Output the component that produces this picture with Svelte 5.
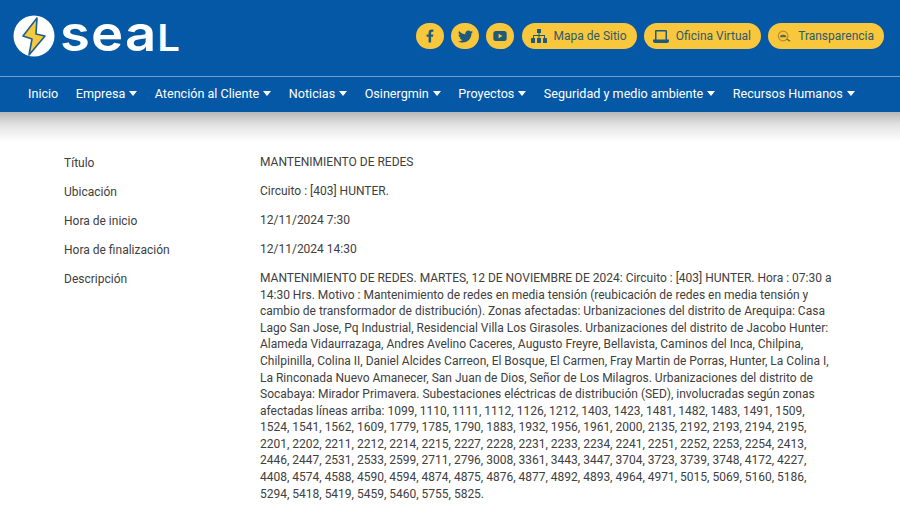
<script>
	const menu = [
		{ label: 'Inicio', caret: false },
		{ label: 'Empresa', caret: true },
		{ label: 'Atención al Cliente', caret: true },
		{ label: 'Noticias', caret: true },
		{ label: 'Osinergmin', caret: true },
		{ label: 'Proyectos', caret: true },
		{ label: 'Seguridad y medio ambiente', caret: true },
		{ label: 'Recursos Humanos', caret: true }
	];

	const rows = [
		['Título', 'MANTENIMIENTO DE REDES'],
		['Ubicación', 'Circuito : [403] HUNTER.'],
		['Hora de inicio', '12/11/2024 7:30'],
		['Hora de finalización', '12/11/2024 14:30']
	];

	const descripcion = `MANTENIMIENTO DE REDES. MARTES, 12 DE NOVIEMBRE DE 2024: Circuito : [403] HUNTER. Hora : 07:30 a 14:30 Hrs. Motivo : Mantenimiento de redes en media tensión (reubicación de redes en media tensión y cambio de transformador de distribución). Zonas afectadas: Urbanizaciones del distrito de Arequipa: Casa Lago San Jose, Pq Industrial, Residencial Villa Los Girasoles. Urbanizaciones del distrito de Jacobo Hunter: Alameda Vidaurrazaga, Andres Avelino Caceres, Augusto Freyre, Bellavista, Caminos del Inca, Chilpina, Chilpinilla, Colina II, Daniel Alcides Carreon, El Bosque, El Carmen, Fray Martin de Porras, Hunter, La Colina I, La Rinconada Nuevo Amanecer, San Juan de Dios, Señor de Los Milagros. Urbanizaciones del distrito de Socabaya: Mirador Primavera. Subestaciones eléctricas de distribución (SED), involucradas según zonas afectadas líneas arriba: 1099, 1110, 1111, 1112, 1126, 1212, 1403, 1423, 1481, 1482, 1483, 1491, 1509, 1524, 1541, 1562, 1609, 1779, 1785, 1790, 1883, 1932, 1956, 1961, 2000, 2135, 2192, 2193, 2194, 2195, 2201, 2202, 2211, 2212, 2214, 2215, 2227, 2228, 2231, 2233, 2234, 2241, 2251, 2252, 2253, 2254, 2413, 2446, 2447, 2531, 2533, 2599, 2711, 2796, 3008, 3361, 3443, 3447, 3704, 3723, 3739, 3748, 4172, 4227, 4408, 4574, 4588, 4590, 4594, 4874, 4875, 4876, 4877, 4892, 4893, 4964, 4971, 5015, 5069, 5160, 5186, 5294, 5418, 5419, 5459, 5460, 5755, 5825.`;
</script>

<header class="site-header">
	<div class="top">
		<div class="logo">
			<svg class="logo-mark" viewBox="0 0 42 42" width="42" height="42">
				<circle cx="21" cy="21" r="20.5" fill="#fff" />
				<path d="M24 3 L10 21 L19 24 L16 40 L32 21 L23 19 Z" fill="#f7c93e" stroke="#1c5f8c" stroke-width="1.600" stroke-linejoin="round" />
			</svg>
			<span class="logo-text">sea<span class="logo-l">L</span></span>
		</div>
		<div class="actions">
			<a class="round" aria-label="Facebook">
				<svg viewBox="0 0 320 512" width="8" height="14"><path d="M279 288l14-93h-89v-60c0-25 12-50 52-50h41V7s-37-7-72-7c-73 0-121 45-121 125v70H23v93h81v224h100V288z" /></svg>
			</a>
			<a class="round" aria-label="Twitter">
				<svg viewBox="0 0 512 512" width="15" height="15"><path d="M459 152c.3 4.500.3 9 .3 13.600 0 138.700-105.600 298.600-298.600 298.600-59.500 0-114.700-17.200-161.100-47.100 8.400 1 16.600 1.300 25.300 1.300 49 0 94.300-16.600 130.300-44.800-46.100-1-84.800-31.200-98.100-72.800 6.500 1 13 1.600 19.800 1.600 9.400 0 18.800-1.300 27.600-3.600-48.100-9.700-84.100-52-84.100-103v-1.300c14 7.800 30.200 12.700 47.400 13.300-28.300-18.800-46.800-51-46.800-87.400 0-19.500 5.200-37.400 14.300-53 51.700 63.700 129.300 105.300 216.400 109.800-1.600-7.800-2.600-15.900-2.600-24 0-57.800 46.800-104.900 104.900-104.900 30.200 0 57.500 12.700 76.700 33.100 23.700-4.500 46.500-13.300 66.600-25.300-7.800 24-24.400 44.200-46.100 57.200 21.100-2.300 41.600-8.100 60.400-16.200-14.300 20.800-32.200 39.300-52.600 54.300z" /></svg>
			</a>
			<a class="round" aria-label="YouTube">
				<svg viewBox="0 0 16 12" width="14" height="10"><path fill-rule="evenodd" d="M3 0h10a3 3 0 0 1 3 3v6a3 3 0 0 1-3 3H3a3 3 0 0 1-3-3V3a3 3 0 0 1 3-3zM6.300 3.300v5.400L11 6z" /></svg>
			</a>
			<a class="pill">
				<svg viewBox="0 0 16 14" width="16" height="14"><path d="M6 0h4v4H8.500v2H14v3h1.500a.5.500 0 0 1 .5.500V14h-4V9.500a.5.500 0 0 1 .5-.500H13V7H8.500v2H10v5H6V9h1.500V7H3v2h1v5H0V9.500A.5.500 0 0 1 .5 9H2V6h5.500V4H6z" /></svg>
				Mapa de Sitio
			</a>
			<a class="pill">
				<svg viewBox="0 0 16 13" width="16" height="13"><path fill-rule="evenodd" d="M3 0h10a1 1 0 0 1 1 1v8.500h2V11a2 2 0 0 1-2 2H2a2 2 0 0 1-2-2V9.500h2V1a1 1 0 0 1 1-1zm.5 1.500v8h9v-8z" /></svg>
				Oficina Virtual
			</a>
			<a class="pill">
				<svg viewBox="0 0 16 14" width="14" height="14"><circle cx="7" cy="7" r="5.500" fill="none" stroke="#b98a2c" stroke-width="1.300" /><path d="M3.500 7c1-2 6-2 7 0v1.500h-7z" fill="#5a6a4e" /><path d="M11 10.500l4 2.500" stroke="#5a6a4e" stroke-width="1.500" /></svg>
				Transparencia
			</a>
		</div>
	</div>
	<nav class="menu">
		{#each menu as item}
			<a class="menu-item">
				{item.label}
				{#if item.caret}<span class="caret"></span>{/if}
			</a>
		{/each}
	</nav>
</header>

<main class="detail">
	{#each rows as [label, value]}
		<div class="row">
			<div class="label">{label}</div>
			<div class="value">{value}</div>
		</div>
	{/each}
	<div class="row">
		<div class="label">Descripción</div>
		<div class="value">{descripcion}</div>
	</div>
</main>

<style>
	:global(body) {
		background: #fff;
		font-family: Roboto, sans-serif;
		overflow: hidden;
	}

	.site-header {
		background: #0458a5;
		position: relative;
	}

	/* soft grey band under the blue bar */
	.site-header::after {
		content: '';
		position: absolute;
		left: 0;
		right: 0;
		top: 100%;
		height: 30px;
		background: linear-gradient(#b8b8b8, #e4e4e4 45%, #fff);
	}

	.top {
		display: flex;
		align-items: center;
		justify-content: space-between;
		height: 72px;
		padding: 0 16px 4px 13px;
		border-bottom: 1px solid #6b9fd0;
	}

	.logo {
		display: flex;
		align-items: center;
		gap: 5px;
	}

	.logo-text {
		font-family: Inter, sans-serif;
		font-size: 50px;
		line-height: 42px;
		font-weight: 600;
		color: #fff;
		letter-spacing: 1px;
		margin-top: -2px;
		transform: scaleX(1.09);
		transform-origin: left center;
	}

	.logo-l {
		font-size: 37px;
	}

	.actions {
		display: flex;
		align-items: center;
		gap: 7.200px;
	}

	.round,
	.pill {
		display: flex;
		align-items: center;
		justify-content: center;
		height: 26px;
		background: #f8c73c;
		border-radius: 13px;
		color: #2d5a6e;
		font-size: 12px;
		white-space: nowrap;
	}

	.round {
		width: 28px;
	}

	.round svg,
	.pill svg {
		fill: #1f5a7a;
	}

	.pill {
		gap: 7px;
		padding: 0 10px 0 9px;
	}

	.menu {
		display: flex;
		align-items: center;
		height: 33px;
		padding: 0 0 2px 28px;
		gap: 17.500px;
	}

	.menu-item {
		display: flex;
		align-items: center;
		gap: 4px;
		color: #fff;
		font-size: 12.600px;
		white-space: nowrap;
	}

	.caret {
		width: 0;
		height: 0;
		border-left: 4.500px solid transparent;
		border-right: 4.500px solid transparent;
		border-top: 5px solid #fff;
	}

	.detail {
		padding: 42px 64px 0;
	}

	.row {
		display: grid;
		grid-template-columns: 196px 576px;
		margin-bottom: 11.400px;
	}

	.label,
	.value {
		font-size: 12px;
		line-height: 16.600px;
		color: #404040;
	}

	.label {
		padding-top: 1px;
	}
</style>
